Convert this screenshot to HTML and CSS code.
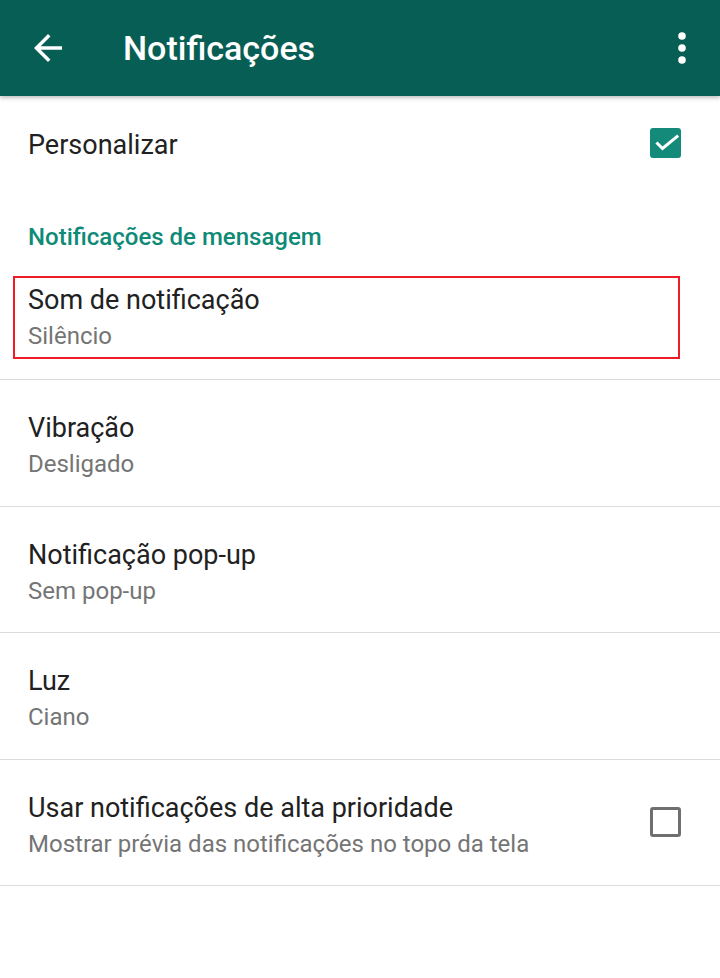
FILE: index.html
```html
<!DOCTYPE html>
<html lang="pt">
<head>
<meta charset="utf-8">
<title>Notificações</title>
<link rel="stylesheet" href="styles.css">
</head>
<body>
<header class="appbar">
  <svg class="icon-back" viewBox="0 0 24 24" width="42" height="42"><path fill="#fff" d="M20 11H7.83l5.59-5.59L12 4l-8 8 8 8 1.41-1.41L7.83 13H20v-2z"/></svg>
  <h1 class="appbar-title">Notificações</h1>
  <svg class="icon-more" viewBox="0 0 24 24" width="48" height="48"><circle cx="12" cy="6" r="1.9" fill="#fff"/><circle cx="12" cy="12" r="1.9" fill="#fff"/><circle cx="12" cy="18" r="1.9" fill="#fff"/></svg>
</header>
<main class="list">
  <div class="row-check">
    <span class="title">Personalizar</span>
    <span class="checkbox checked"><svg viewBox="0 0 30 30" width="30" height="30"><path fill="none" stroke="#fff" stroke-width="3" stroke-linecap="square" d="M6.5 15.5l5 5L26 8.5"/></svg></span>
  </div>
  <div class="section-header">Notificações de mensagem</div>
  <div class="row row-highlight">
    <div class="highlight">
      <div class="title">Som de notificação</div>
      <div class="subtitle">Silêncio</div>
    </div>
  </div>
  <div class="row">
    <div class="title">Vibração</div>
    <div class="subtitle">Desligado</div>
  </div>
  <div class="row">
    <div class="title">Notificação pop-up</div>
    <div class="subtitle">Sem pop-up</div>
  </div>
  <div class="row">
    <div class="title">Luz</div>
    <div class="subtitle">Ciano</div>
  </div>
  <div class="row row-flex">
    <div class="row-text">
      <div class="title">Usar notificações de alta prioridade</div>
      <div class="subtitle">Mostrar prévia das notificações no topo da tela</div>
    </div>
    <span class="checkbox"></span>
  </div>
</main>
</body>
</html>
```

FILE: styles.css
```css
* { box-sizing: border-box; }
html, body { margin: 0; padding: 0; background: #fff; }
body {
  width: 720px;
  height: 978px;
  overflow: hidden;
  font-family: Roboto, "Noto Sans", "Liberation Sans", sans-serif;
  color: #212121;
}
.appbar {
  height: 96px;
  background: #075e54;
  display: flex;
  align-items: center;
  box-shadow: 0 2px 4px rgba(0,0,0,0.25);
  position: relative;
  z-index: 1;
}
.icon-back { margin-left: 27px; flex: none; }
.appbar-title {
  margin: 0 0 0 54px;
  font-size: 34px;
  font-weight: 500;
  color: #fff;
  flex: 1;
}
.icon-more { margin-right: 14px; flex: none; }

.list { display: flex; flex-direction: column; }
.title { font-size: 27px; line-height: 32px; color: #212121; }
.subtitle { font-size: 24px; line-height: 28px; color: #757575; margin-top: 6px; }

.row-check {
  height: 98px;
  display: flex;
  align-items: center;
  justify-content: space-between;
  padding: 0 39px 0 28px;
}
.row-check .checkbox { margin-bottom: 4px; }
.checkbox {
  width: 31px;
  height: 30px;
  border: 3px solid #6f6f6f;
  border-radius: 3px;
  display: flex;
  align-items: center;
  justify-content: center;
  flex: none;
}
.checkbox.checked { background: #138a7a; border: none; }

.section-header {
  height: 59px;
  padding: 29px 0 0 28px;
  font-size: 24px;
  line-height: 28px;
  font-weight: 500;
  color: #0e8a77;
}

.row {
  height: 126.5px;
  padding: 32px 28px 0 28px;
  border-bottom: 1px solid #dcdcdc;
}
.row-highlight { height: 127px; padding: 23px 0 0 13px; }
.highlight {
  width: 667px;
  height: 83px;
  border: 2px solid #ee1c25;
  padding: 6px 0 0 13px;
}
.row-flex {
  display: flex;
  align-items: flex-start;
  justify-content: space-between;
  padding: 32px 39px 0 28px;
}
.row-flex .checkbox { margin-top: 15px; }
```
